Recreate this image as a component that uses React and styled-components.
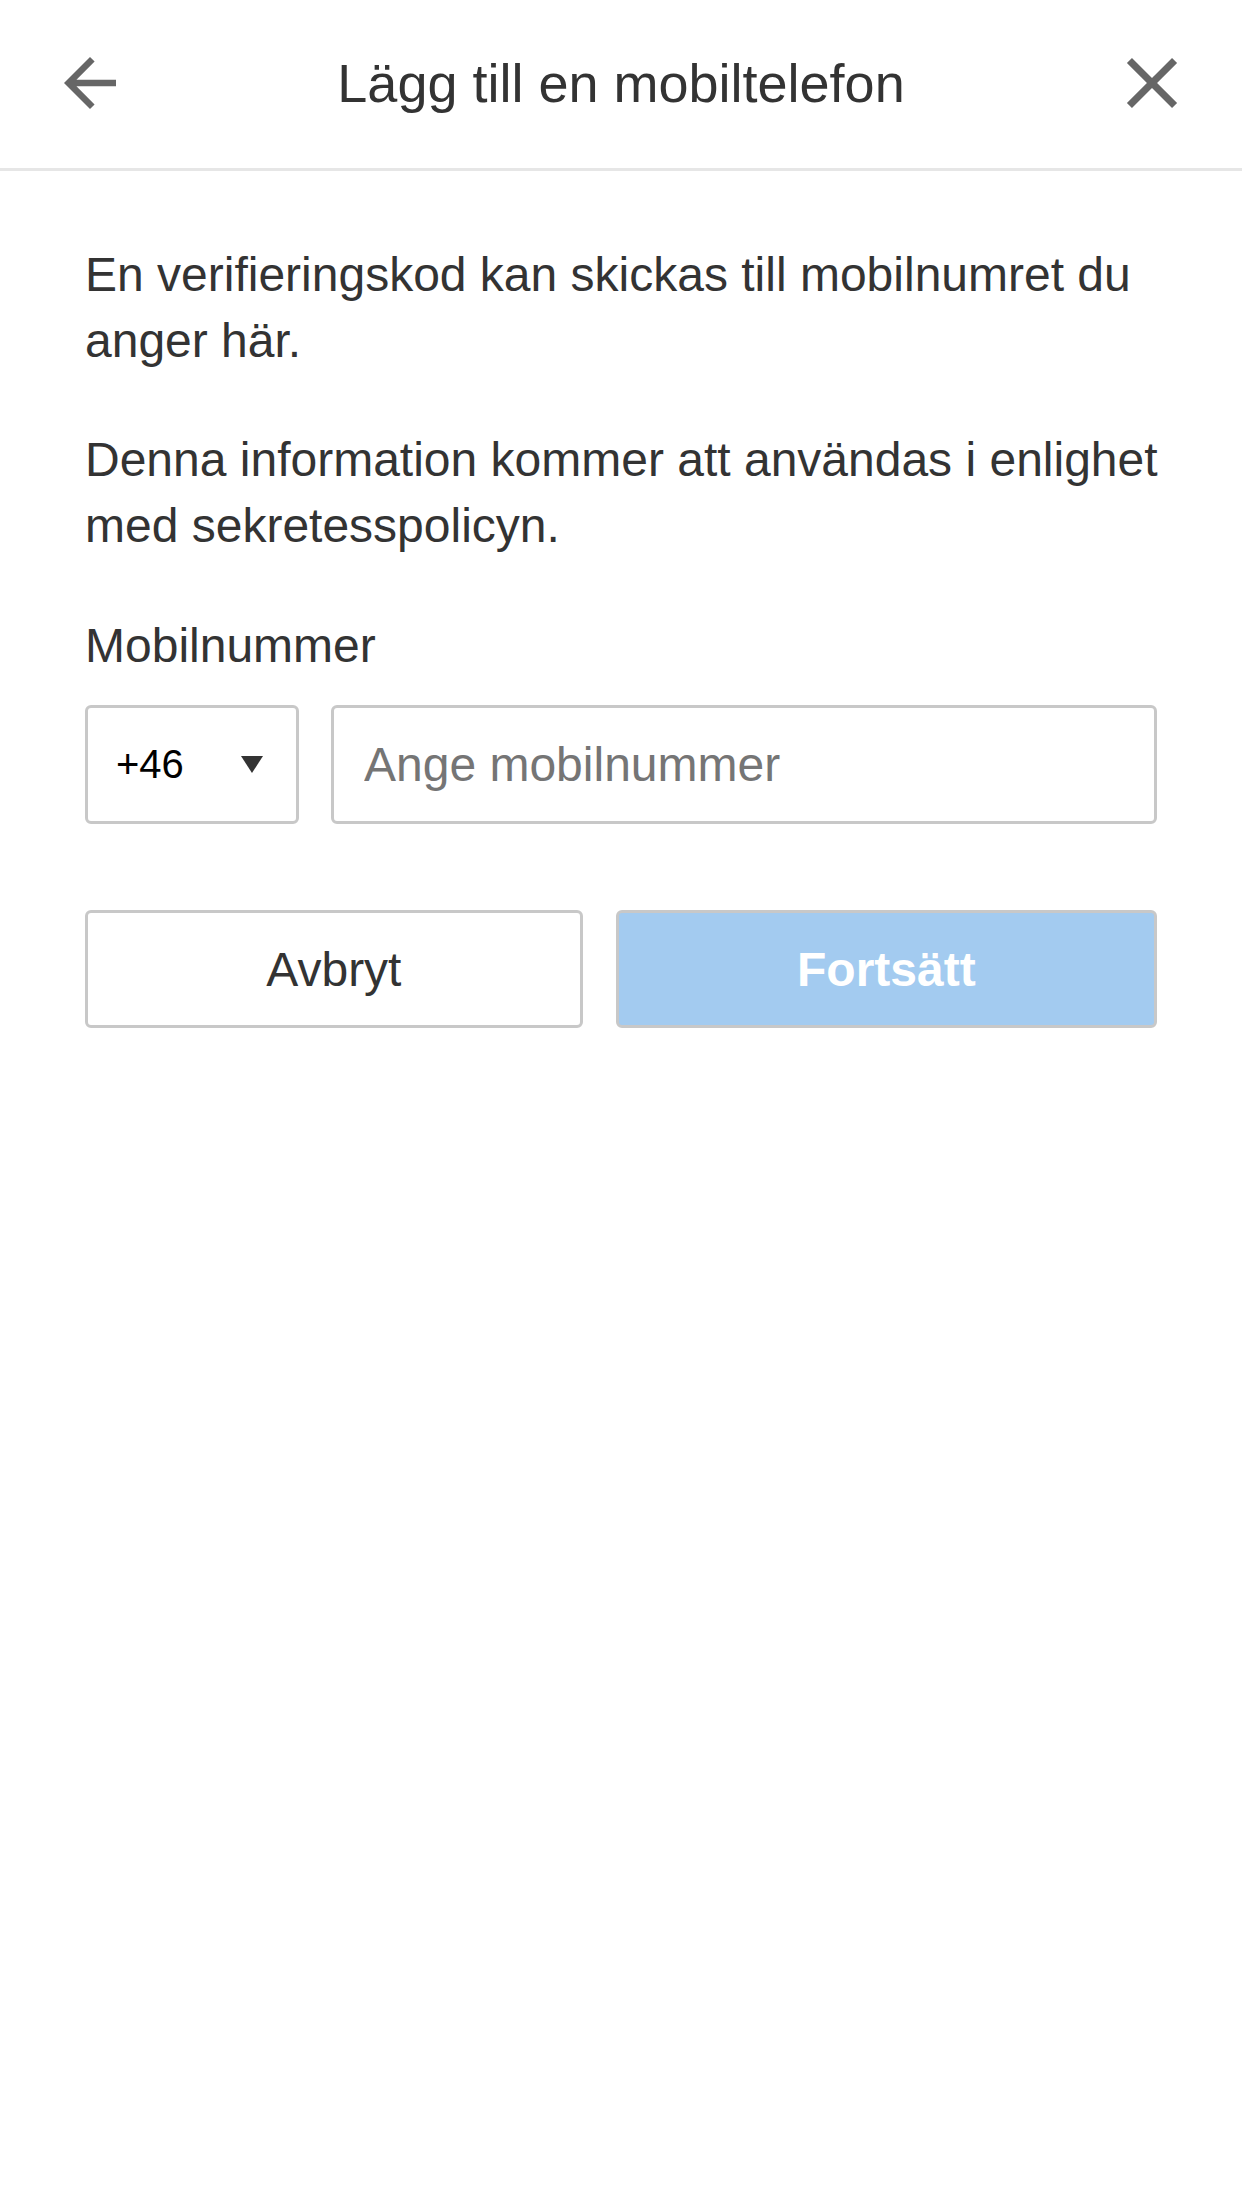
import React from "react";
import styled, { createGlobalStyle } from "styled-components";

const GlobalStyle = createGlobalStyle`
  html, body {
    margin: 0;
    padding: 0;
    background: #ffffff;
  }
  body {
    font-family: "Liberation Sans", Arial, Helvetica, sans-serif;
    color: #333333;
  }
  * { box-sizing: border-box; }
`;

const Page = styled.div`
  width: 1242px;
  min-height: 2208px;
  background: #ffffff;
  display: flex;
  flex-direction: column;
`;

const Header = styled.header`
  height: 171px;
  display: flex;
  align-items: center;
  padding: 0 40px 2px;
  border-bottom: 3px solid #e6e6e6;
`;

const IconButton = styled.button`
  width: 100px;
  height: 100px;
  display: flex;
  align-items: center;
  justify-content: center;
  padding: 0;
  border: none;
  background: transparent;
  color: #666666;
  cursor: pointer;
  flex: none;
`;

const Title = styled.h1`
  flex: 1;
  margin: 0;
  text-align: center;
  font-size: 54px;
  font-weight: 400;
  color: #333333;
  line-height: normal;
`;

const Content = styled.main`
  padding: 71px 85px 0;
  display: flex;
  flex-direction: column;
`;

const Paragraph = styled.p`
  margin: ${(p) => p.$gap || 0}px -10px 0 0;
  font-size: 48px;
  line-height: 66px;
  color: #333333;
`;

const Label = styled.label`
  margin-top: 54px;
  font-size: 48px;
  line-height: 66px;
  color: #333333;
`;

const PhoneRow = styled.div`
  margin-top: 26px;
  display: flex;
  gap: 32px;
`;

const CountrySelect = styled.div`
  width: 214px;
  height: 119px;
  flex: none;
  display: flex;
  align-items: center;
  justify-content: space-between;
  padding: 0 33px 0 28px;
  border: 3px solid #c8c8c8;
  border-radius: 6px;
  font-size: 40px;
  color: #000000;
`;

const Caret = styled.span`
  width: 0;
  height: 0;
  border-left: 11.5px solid transparent;
  border-right: 11.5px solid transparent;
  border-top: 17px solid #333333;
`;

const NumberInput = styled.input`
  flex: 1;
  min-width: 0;
  height: 119px;
  padding: 0 30px;
  border: 3px solid #c8c8c8;
  border-radius: 6px;
  font-family: "Liberation Sans", Arial, Helvetica, sans-serif;
  font-size: 48px;
  color: #333333;
  background: #ffffff;
  outline: none;
  &::placeholder {
    color: #757575;
  }
`;

const ButtonRow = styled.div`
  margin-top: 86px;
  display: flex;
  gap: 33px;
`;

const ActionButton = styled.button`
  flex: 1 1 auto;
  height: 118px;
  padding: 0 20px;
  border: 3px solid #c8c8c8;
  border-radius: 6px;
  font-family: "Liberation Sans", Arial, Helvetica, sans-serif;
  font-size: 48px;
  font-weight: ${(p) => (p.$primary ? 700 : 400)};
  color: ${(p) => (p.$primary ? "#ffffff" : "#333333")};
  background: ${(p) => (p.$primary ? "#a3cbf0" : "#ffffff")};
  cursor: pointer;
`;

const BackIcon = () => (
  <svg width="78" height="78" viewBox="0 0 24 24" aria-hidden="true">
    <path
      fill="#666666"
      d="M20 11H7.83l5.59-5.59L12 4l-8 8 8 8 1.41-1.41L7.83 13H20v-2z"
    />
  </svg>
);

const CloseIcon = () => (
  <svg width="86" height="86" viewBox="0 0 24 24" aria-hidden="true">
    <path
      fill="#666666"
      d="M19 6.41L17.59 5 12 10.59 6.41 5 5 6.41 10.59 12 5 17.59 6.41 19 12 13.41 17.59 19 19 17.59 13.41 12z"
    />
  </svg>
);

export default function App() {
  return (
    <>
      <GlobalStyle />
      <Page>
        <Header>
          <IconButton aria-label="Tillbaka">
            <BackIcon />
          </IconButton>
          <Title>Lägg till en mobiltelefon</Title>
          <IconButton aria-label="Stäng">
            <CloseIcon />
          </IconButton>
        </Header>
        <Content>
          <Paragraph>
            En verifieringskod kan skickas till mobilnumret du anger här.
          </Paragraph>
          <Paragraph $gap={53}>
            Denna information kommer att användas i enlighet med
            sekretesspolicyn.
          </Paragraph>
          <Label htmlFor="mobile">Mobilnummer</Label>
          <PhoneRow>
            <CountrySelect>
              <span>+46</span>
              <Caret />
            </CountrySelect>
            <NumberInput id="mobile" placeholder="Ange mobilnummer" />
          </PhoneRow>
          <ButtonRow>
            <ActionButton>Avbryt</ActionButton>
            <ActionButton $primary>Fortsätt</ActionButton>
          </ButtonRow>
        </Content>
      </Page>
    </>
  );
}
